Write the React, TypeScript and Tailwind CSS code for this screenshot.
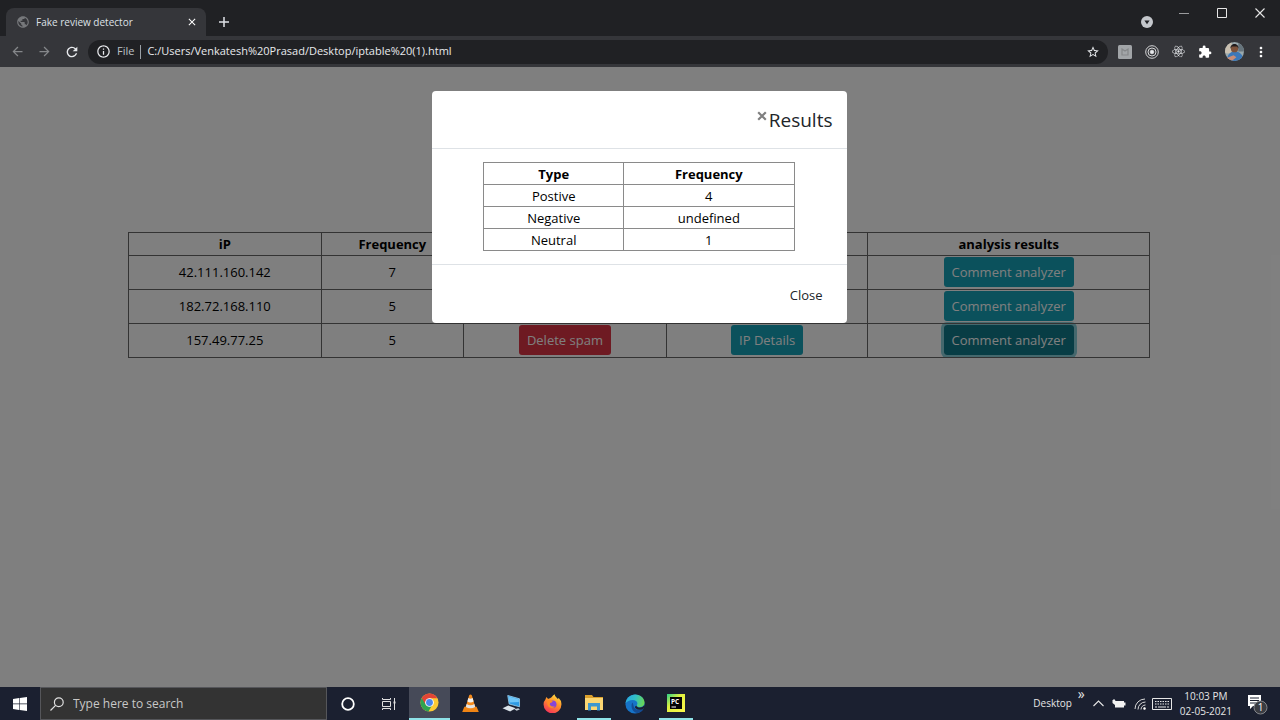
import type { ReactNode } from "react";
import {
  MdArrowBack,
  MdArrowForward,
  MdClose,
  MdExtension,
  MdInfoOutline,
  MdMoreVert,
  MdPublic,
  MdRefresh,
  MdStarBorder,
} from "react-icons/md";
import { FaReact } from "react-icons/fa";

const logs = [
  { ip: "42.111.160.142", frequency: 7, active: false },
  { ip: "182.72.168.110", frequency: 5, active: false },
  { ip: "157.49.77.25", frequency: 5, active: true },
];

const results = [
  { type: "Postive", frequency: "4" },
  { type: "Negative", frequency: "undefined" },
  { type: "Neutral", frequency: "1" },
];

function TabStrip() {
  return (
    <div className="flex h-9 items-start bg-[#202124] pl-1.5 text-[#dee1e6]">
      <div className="mt-2 flex h-7 w-[200px] items-center rounded-t-lg bg-[#35363a] pl-2.5 pr-1.5">
        <MdPublic className="size-3.5 text-[#76787b]" />
        <span className="ml-1.5 flex-1 whitespace-nowrap text-[10px]">Fake review detector</span>
        <button aria-label="Close tab" className="p-0.5 text-white">
          <MdClose className="size-3" />
        </button>
      </div>
      <button aria-label="New tab" className="ml-3 mt-4 text-[#dee1e6]">
        <svg viewBox="0 0 12 12" className="size-3" stroke="currentColor" strokeWidth="1.5">
          <path d="M6 1v10M1 6h10" />
        </svg>
      </button>
      <div className="flex-1" />
      <button aria-label="Search tabs" className="mr-[26px] mt-4">
        <svg viewBox="0 0 12 12" className="size-3">
          <circle cx="6" cy="6" r="6" fill="#c4c7cc" />
          <path d="M3.4 4.4h5.2L6 8.2z" fill="#202124" />
        </svg>
      </button>
      <div className="flex h-[26px] items-center gap-7 pr-[15px]">
        <button aria-label="Minimize">
          <svg viewBox="0 0 10 10" className="size-2.5" stroke="#9a9b9d">
            <path d="M0 5.5h10" />
          </svg>
        </button>
        <button aria-label="Maximize">
          <svg viewBox="0 0 10 10" className="size-2.5" fill="none" stroke="#e6e6e6">
            <path d="M.5.5h9v9h-9z" />
          </svg>
        </button>
        <button aria-label="Close window">
          <svg viewBox="0 0 10 10" className="size-2.5" stroke="#e6e6e6" strokeWidth="1.1">
            <path d="M.5.5l9 9M9.5.5l-9 9" />
          </svg>
        </button>
      </div>
    </div>
  );
}

function AddressBar() {
  return (
    <div className="flex h-[31px] items-center bg-[#35363a] pl-2.5 pr-[11px] text-[#e8eaed]">
      <button aria-label="Back" className="mr-3 text-[#85878a]">
        <MdArrowBack className="size-[15px]" />
      </button>
      <button aria-label="Forward" className="mr-3 text-[#85878a]">
        <MdArrowForward className="size-[15px]" />
      </button>
      <button aria-label="Reload" className="mr-2">
        <MdRefresh className="size-4" />
      </button>
      <div className="flex h-6 flex-1 items-center rounded-full bg-[#202124] pl-2 pr-2">
        <MdInfoOutline className="size-[15px]" />
        <label htmlFor="url" className="ml-1.5 text-[11px] text-[#bdc1c6]">
          File
        </label>
        <span className="mx-1.5 h-3.5 w-px bg-[#9aa0a6]" />
        <input
          id="url"
          className="min-w-0 flex-1 bg-transparent text-[11px] outline-none"
          defaultValue="C:/Users/Venkatesh%20Prasad/Desktop/iptable%20(1).html"
        />
        <button aria-label="Bookmark">
          <MdStarBorder className="size-3.5" />
        </button>
      </div>
      <div className="ml-2.5 flex items-center gap-[13px]">
        <svg viewBox="0 0 14 14" className="size-3.5">
          <rect width="14" height="14" rx="1.5" fill="#a2a5a8" />
          <path d="M4 4l3 2 3-2v6H4z" fill="none" stroke="#858789" strokeWidth="1.2" />
        </svg>
        <svg viewBox="0 0 14 14" className="size-3.5" fill="none" stroke="#d4d5d7">
          <circle cx="7" cy="7" r="6.3" />
          <circle cx="7" cy="7" r="4" />
          <circle cx="7" cy="7" r="1.8" fill="#e8eaed" />
        </svg>
        <FaReact className="size-[13px]" />
        <MdExtension className="size-3.5 text-white" />
        <button aria-label="Profile">
          <svg viewBox="0 0 20 20" className="size-[19px]">
            <clipPath id="avatar">
              <circle cx="10" cy="10" r="10" />
            </clipPath>
            <g clipPath="url(#avatar)">
              <rect width="20" height="20" fill="#9aa9ad" />
              <rect width="7" height="12" fill="#c9c0b0" />
              <rect x="14" width="6" height="10" fill="#66747c" />
              <path d="M2 20c0-7 4-10 8-10s8 2 9 7v3z" fill="#3c78b8" />
              <circle cx="10" cy="7" r="3.8" fill="#7d523a" />
              <path d="M5.8 7c-.6-6.500 9-6.500 8.400 0l-1.400-2.200H7.200z" fill="#211c1c" />
              <path d="M1 20v-3l8-3 3 2-5 4z" fill="#c98d76" />
            </g>
          </svg>
        </button>
        <button aria-label="Menu" className="-ml-1">
          <MdMoreVert className="size-4 text-white" />
        </button>
      </div>
    </div>
  );
}

const cell = "border border-[#666666] p-0 pt-0.5 text-center";
const buttonCell = "border border-[#666666] p-0 text-center align-top";
const buttonBase = "mx-auto block h-8 rounded border border-transparent bg-clip-padding px-2 pt-0.5 text-white";

function InfoButton({ children, active = false }: { children: ReactNode; active?: boolean }) {
  const look = active ? "bg-[#117a8b] ring-2 ring-[#17a2b8]/50" : "bg-[#17a2b8]";
  return <button className={`${buttonBase} ${look}`}>{children}</button>;
}

function LogTable() {
  return (
    <table className="mx-auto w-4/5 table-fixed border-collapse border border-[#444444] text-[13px] text-black">
      <colgroup>
        <col className="w-[18.9%]" />
        <col className="w-[13.9%]" />
        <col className="w-[19.9%]" />
        <col className="w-[19.7%]" />
        <col className="w-[27.6%]" />
      </colgroup>
      <thead>
        <tr className="h-[22px]">
          <th className={cell}>iP</th>
          <th className={cell}>Frequency</th>
          <th className={cell} />
          <th className={cell} />
          <th className={cell}>analysis results</th>
        </tr>
      </thead>
      <tbody>
        {logs.map((log) => (
          <tr key={log.ip} className="h-[34px]">
            <td className={cell}>{log.ip}</td>
            <td className={cell}>{log.frequency}</td>
            <td className={buttonCell}>
              <button className={`${buttonBase} bg-[#dc3545]`}>Delete spam</button>
            </td>
            <td className={buttonCell}>
              <InfoButton>IP Details</InfoButton>
            </td>
            <td className={buttonCell}>
              <InfoButton active={log.active}>Comment analyzer</InfoButton>
            </td>
          </tr>
        ))}
      </tbody>
    </table>
  );
}

const resultCell = "border border-[#8a8a8a] p-0 pt-0.5 text-center leading-[19px]";

function ResultsDialog() {
  return (
    <div
      role="dialog"
      aria-labelledby="results-title"
      className="mx-auto w-full max-w-[415px] rounded bg-white text-[13px] text-black"
    >
      <div className="flex h-[58px] items-center justify-end border-b border-[#dee2e6] pr-3.5">
        <button aria-label="Dismiss" className="mb-2 mr-0.5 text-[#7f7f7f]">
          <svg viewBox="0 0 10 10" className="size-2.5" stroke="currentColor" strokeWidth="2.2">
            <path d="M1.2 1.2l7.600 7.600M8.800 1.200L1.200 8.800" />
          </svg>
        </button>
        <h5 id="results-title" className="pt-0.5 text-[19px] font-medium text-[#212529]">
          Results
        </h5>
      </div>
      <div className="py-[13px]">
        <table className="mx-auto w-3/4 table-fixed border-collapse border border-[#555555]">
          <colgroup>
            <col className="w-[45%]" />
            <col className="w-[55%]" />
          </colgroup>
          <thead>
            <tr className="h-[22px]">
              <th className={resultCell}>Type</th>
              <th className={resultCell}>Frequency</th>
            </tr>
          </thead>
          <tbody>
            {results.map((row) => (
              <tr key={row.type} className="h-[22px]">
                <td className={resultCell}>{row.type}</td>
                <td className={resultCell}>{row.frequency}</td>
              </tr>
            ))}
          </tbody>
        </table>
      </div>
      <div className="flex h-[59px] items-center justify-end border-t border-[#dee2e6] pr-[13px] pt-0.5">
        <button className="h-8 px-[11px] pt-0.5 text-[#212529]">Close</button>
      </div>
    </div>
  );
}

function TaskButton({
  label,
  state = "idle",
  children,
}: {
  label: string;
  state?: "idle" | "open" | "focused";
  children: ReactNode;
}) {
  return (
    <button
      aria-label={label}
      className={`flex w-[41px] flex-col items-center ${state === "focused" ? "bg-[#464a58]" : ""}`}
    >
      <span className="flex flex-1 items-center">{children}</span>
      {state !== "idle" && (
        <span className={`h-0.5 bg-[#8fe3e8] ${state === "focused" ? "w-full" : "w-[34px]"}`} />
      )}
    </button>
  );
}

function Taskbar() {
  return (
    <footer className="flex h-[33px] items-stretch bg-[#1b2030] text-[#e6e6e6]">
      <button aria-label="Start" className="flex w-10 items-center justify-center">
        <svg viewBox="0 0 14 14" className="size-3.5" fill="#fff">
          <path d="M0 2l6.2-.9v5.5H0zM6.8 1L14 0v6.6H6.8zM0 7.3h6.2v5.6L0 12zM6.8 7.3H14V14l-7.2-1z" />
        </svg>
      </button>
      <label className="flex w-[287px] items-center border border-[#55565a] bg-[#333333] pl-[9px]">
        <svg viewBox="0 0 14 14" className="size-3.5" fill="none" stroke="#e0e0e0" strokeWidth="1.2">
          <circle cx="8.8" cy="5.2" r="4.4" />
          <path d="M5.6 8.4L.5 13.5" />
        </svg>
        <input
          aria-label="Search"
          placeholder="Type here to search"
          className="ml-[9px] min-w-0 flex-1 bg-transparent text-xs outline-none placeholder:text-[#c8c8c8]"
        />
      </label>
      <TaskButton label="Cortana">
        <svg viewBox="0 0 14 14" className="size-3.5" fill="none" stroke="#fff" strokeWidth="1.8">
          <circle cx="7" cy="7" r="5.8" />
        </svg>
      </TaskButton>
      <TaskButton label="Task view">
        <svg viewBox="0 0 15 14" className="h-3.5 w-[15px]" fill="none" stroke="#e0e0e0">
          <path d="M1.5 4.5h8v5h-8zM1.5 1v1.5h8V1M1.5 13v-1.5h8V13M13.5 1v12" />
          <path d="M12.5 5.5h2" strokeWidth="2" />
        </svg>
      </TaskButton>
      <TaskButton label="Chrome" state="focused">
        <svg viewBox="0 0 20 20" className="size-[19px]">
          <circle cx="10" cy="10" r="9.5" fill="#fbc934" />
          <path d="M10 10L1.8 5.2A9.5 9.5 0 0 0 9 19.4l4.2-7.6z" fill="#2fa350" />
          <path d="M10 5.4h8.2A9.5 9.5 0 0 0 1.8 5.2l4.1 7z" fill="#e14436" />
          <circle cx="10" cy="10" r="4.6" fill="#fff" />
          <circle cx="10" cy="10" r="3.6" fill="#4a86ec" />
        </svg>
      </TaskButton>
      <TaskButton label="VLC">
        <svg viewBox="0 0 18 20" className="h-[19px] w-[17px]">
          <path d="M2.5 13.5h13L17.8 19H.2z" fill="#f08414" />
          <path d="M7.6 1.2Q9 0 10.4 1.2l3.9 13.2Q9 18 3.7 14.4z" fill="#f58a1c" />
          <path d="M6.7 4.3Q9 5.8 11.3 4.3l1 3.5Q9 10 5.7 7.8z" fill="#f1f1f1" />
          <path d="M4.9 10.6Q9 13.2 13.1 10.6l.9 3Q9 16.5 4 13.6z" fill="#e4e4e4" />
        </svg>
      </TaskButton>
      <TaskButton label="Remote desktop">
        <svg viewBox="0 0 20 18" className="h-[17px] w-[19px]">
          <path d="M6 .5l12.500 3.500v8.500L7.500 9.500z" fill="#2f9be4" stroke="#a5d8f5" strokeWidth=".8" />
          <path d="M7 1.500l10.800 3v3l-10 .500z" fill="#6fc6f8" />
          <path d="M.5 14l6-3 8 3-6 3.500z" fill="#dce4ea" />
          <path d="M13 15l4-1 2 1.200-3.500 1.500z" fill="#c3ccd3" />
        </svg>
      </TaskButton>
      <TaskButton label="Firefox">
        <svg viewBox="0 0 20 20" className="size-[19px]">
          <defs>
            <linearGradient id="fox" x1=".8" y1="0" x2=".3" y2="1">
              <stop offset="0" stopColor="#ffe545" />
              <stop offset=".45" stopColor="#ff9229" />
              <stop offset="1" stopColor="#f4315a" />
            </linearGradient>
          </defs>
          <path
            d="M3.6 3.2l1.8 2q.8-.6 2-.7L9 3.500q1.500-2.500 3.200-3.300.2 2 2 3.600l1.400 1.500.9-1Q19.600 7 19.400 11A9.400 9.400 0 0 1 .6 11Q.5 8 2.4 6z"
            fill="url(#fox)"
          />
          <circle cx="10.2" cy="10.8" r="4" fill="#8646d8" />
          <path d="M4.3 7.2q3-1.800 6 .6-1 1.400-2.800 1.600-1 1.500.5 3 1.400 1.200 4.500.4-2 3-5.400 1.500-3.300-1.600-2.800-7.100z" fill="#ff8a25" />
        </svg>
      </TaskButton>
      <TaskButton label="File Explorer" state="open">
        <svg viewBox="0 0 20 17" className="h-[17px] w-5">
          <path d="M1 1h7l1.5 2H19v12H1z" fill="#dba02d" />
          <path d="M1 4h18v12H1z" fill="#fbd673" />
          <path d="M4 9h12v7.5h-3V12.500H7v4H4z" fill="#3e97cf" />
        </svg>
      </TaskButton>
      <TaskButton label="Edge">
        <svg viewBox="0 0 20 20" className="size-5">
          <defs>
            <linearGradient id="edge" x1="0" y1=".2" x2="1" y2=".4">
              <stop offset="0" stopColor="#2aa7e0" />
              <stop offset=".5" stopColor="#31c0c8" />
              <stop offset="1" stopColor="#68d657" />
            </linearGradient>
          </defs>
          <circle cx="10" cy="10" r="9.6" fill="#1673c8" />
          <path
            d="M.5 9.2C1.2 4 5.2.4 10.2.4c5.6 0 9.400 4 9.400 8.200 0 3-2.200 4.600-4.700 4.600-2.100 0-3.300-.9-3.300-1.600 0-.5.8-.9.8-2.300 0-1.900-2.100-3.400-4.700-3.400-3.100 0-5.600 1.300-7.200 3.300z"
            fill="url(#edge)"
          />
          <path d="M7.2 8.600C5 13.800 8.600 19.500 13 19.100c2.200-.3 4-1.700 5.300-3.500.2-.3 0-.6-.4-.4-4 1.800-7.800.5-9-2.200-.6-1.500-.4-3-1.700-4.400z" fill="#134b93" />
          <path d="M11.400 11.400q.3 2 3.600 2 2.800-.1 4-2l.6 1.400-1.400 2.100q-4.400 2-7.700-.7-1.400-1.500.9-2.800z" fill="#1b2030" />
        </svg>
      </TaskButton>
      <TaskButton label="PyCharm" state="open">
        <svg viewBox="0 0 18 18" className="size-[18px]">
          <defs>
            <linearGradient id="pycharm" x1="0" y1="0" x2="1" y2="1">
              <stop offset="0" stopColor="#2bd289" />
              <stop offset=".4" stopColor="#dff03f" />
              <stop offset="1" stopColor="#fcf84a" />
            </linearGradient>
          </defs>
          <rect width="18" height="18" fill="url(#pycharm)" />
          <rect x="3" y="3" width="12" height="12" fill="#050505" />
          <text x="4" y="9.600" fontSize="6.500" fontWeight="700" fill="#fff">
            PC
          </text>
          <path d="M4.500 13h4.500" stroke="#fff" />
        </svg>
      </TaskButton>
      <div className="flex-1" />
      <div className="flex items-center pr-3">
        <span className="text-[10px]">Desktop</span>
        <button aria-label="More toolbars" className="mb-5 ml-1.5 text-sm leading-none">
          »
        </button>
        <button aria-label="Show hidden icons" className="ml-2">
          <svg viewBox="0 0 11 7" className="h-[7px] w-[11px]" fill="none" stroke="#e6e6e6" strokeWidth="1.100">
            <path d="M.5 6l5-5 5 5" />
          </svg>
        </button>
        <svg viewBox="0 0 14 10" className="ml-2 h-2.5 w-3.5" fill="#f2f2f2">
          <path d="M3 2h9v1.500h1.500v3H12V8.500H3V6L.5 4V1h1V0h1v1h1z" />
        </svg>
        <svg viewBox="0 0 12 12" className="ml-2 size-3" fill="none" stroke="#d8d8d8">
          <path d="M1 11A10 10 0 0 1 11 1M4 11.500A7.500 7.500 0 0 1 11.500 4M7 11.500A4.500 4.500 0 0 1 11.500 7" />
          <circle cx="10.500" cy="10.500" r="1" fill="#fff" />
        </svg>
        <svg viewBox="0 0 20 12" className="ml-1.5 h-3 w-5" fill="none" stroke="#e6e6e6">
          <path d="M.5.5h19v11H.5z" />
          <path d="M3 3.500h14M3 6h14" strokeDasharray="1.500 1" />
          <path d="M3 9h2M6 9h8M15 9h2" />
        </svg>
        <div className="ml-2 text-center text-[10px] leading-[15px]">
          <div className="whitespace-nowrap">10:03 PM</div>
          <div className="whitespace-nowrap">02-05-2021</div>
        </div>
        <button aria-label="Notifications" className="ml-[15px]">
          <svg viewBox="0 0 21 22" className="h-[22px] w-[21px]">
            <path d="M1 2h13v11H6l-3 3v-3H1z" fill="#fff" />
            <path d="M3 5h9M3 7.500h9M3 10h6" stroke="#1b2030" />
            <circle cx="13.500" cy="14.500" r="6.500" fill="#3a3c42" stroke="#83858a" />
            <text x="13.500" y="18" fontSize="10" textAnchor="middle" fill="#fff">
              1
            </text>
          </svg>
        </button>
      </div>
    </footer>
  );
}

export default function App() {
  return (
    <div className="flex min-h-screen flex-col font-['Open_Sans','Noto_Sans',sans-serif]">
      <header>
        <TabStrip />
        <AddressBar />
      </header>
      <main className="relative flex-1 bg-white pr-0.5 pt-[165px]">
        <LogTable />
        <div className="absolute inset-0 bg-black/50 pr-0.5 pt-6">
          <ResultsDialog />
        </div>
      </main>
      <Taskbar />
    </div>
  );
}
